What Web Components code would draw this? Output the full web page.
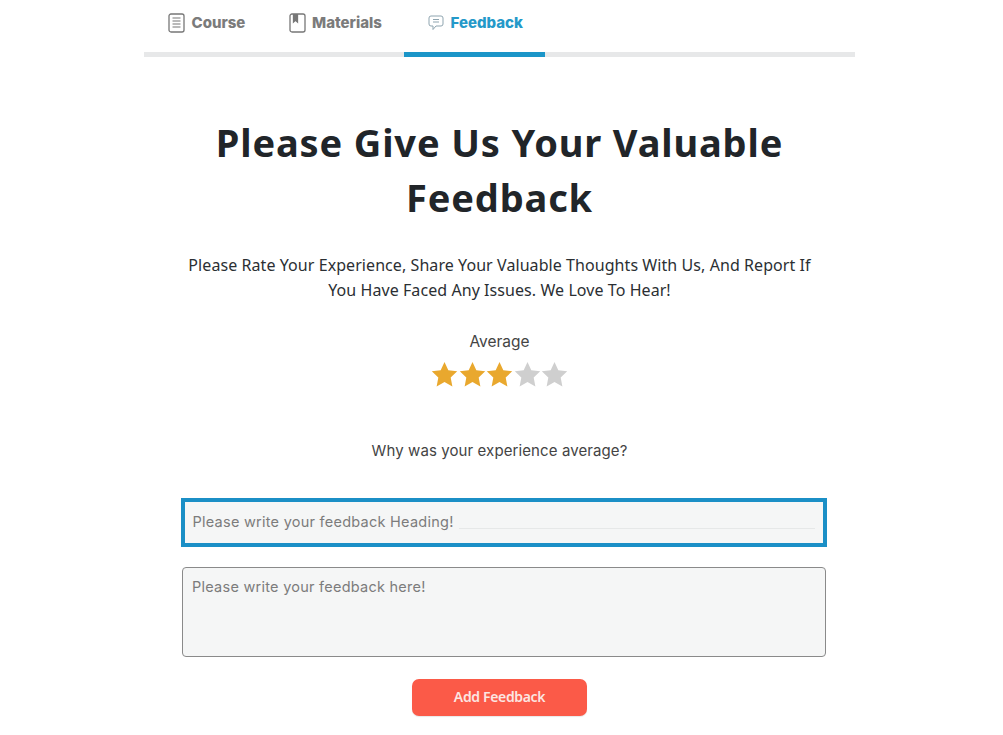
<!DOCTYPE html>
<html>
<head>
<meta charset="utf-8">
<style>
  html, body { margin: 0; background: #fff; }
  body { height: 735px; overflow: hidden; font-family: "Noto Sans", sans-serif; color: #212529; }
</style>
</head>
<body>
<feedback-page></feedback-page>

<script>
const ICONS = {
  course: `<svg width="17" height="20" viewBox="0 0 17 20" fill="none" stroke="#777" stroke-width="1.3"><rect x="1" y="1" width="15" height="18" rx="2"/><path d="M4.5 5h8M4.5 8h8M4.5 11h8M4.5 14h8" stroke-width="1.1"/></svg>`,
  materials: `<svg width="17" height="20" viewBox="0 0 17 20" fill="none" stroke="#777" stroke-width="1.3"><rect x="1" y="1" width="15" height="18" rx="2"/><path d="M4.5 1v8l2-1.8 2 1.8V1" fill="#777"/></svg>`,
  feedback: `<svg width="16" height="16" viewBox="0 0 16 16" fill="none" stroke="#8fa5b0" stroke-width="1"><path d="M3 1h10a2 2 0 0 1 2 2v6a2 2 0 0 1-2 2H8l-3 3.5V11H3a2 2 0 0 1-2-2V3a2 2 0 0 1 2-2z"/><path d="M5 4.500h6M5 7h6"/></svg>`
};

class CourseTabs extends HTMLElement {
  constructor() {
    super();
    this.attachShadow({ mode: "open" });
    this.shadowRoot.innerHTML = `
      <style>
        :host { display: block; font-family: Inter, sans-serif; }
        .tabs { display: flex; height: 52px; border-bottom: 5px solid #e7e8e9; padding-left: 24px; }
        .tab { display: flex; align-items: center; gap: 6.500px; height: 57px; margin-bottom: -5px; box-sizing: border-box; padding-bottom: 12px;
               font-size: 15px; font-weight: 800; color: #7b7b7b; }
        .tab svg { flex: none; }
        .t1 { width: 120.500px; }
        .t2 { width: 115.500px; }
        .t3 { width: 141px; padding-left: 24px; color: #2499c9; border-bottom: 5px solid #1b95c8; padding-bottom: 7px; }
      </style>
      <div class="tabs">
        <div class="tab t1">${ICONS.course}<span>Course</span></div>
        <div class="tab t2">${ICONS.materials}<span>Materials</span></div>
        <div class="tab t3">${ICONS.feedback}<span>Feedback</span></div>
      </div>`;
  }
}
customElements.define("course-tabs", CourseTabs);

class StarRating extends HTMLElement {
  constructor() {
    super();
    this.attachShadow({ mode: "open" });
    const value = parseInt(this.getAttribute("value"), 10) || 0;
    let stars = "";
    for (let i = 0; i < 5; i++) {
      stars += `<svg width="27" height="26" viewBox="0 0 24 23"><path d="M12 .8l3.400 7.300 7.900 1-5.800 5.500 1.500 7.900L12 18.600l-7 3.900 1.500-7.900L.7 9.100l7.900-1z" fill="${i < value ? "#e9a82e" : "#cfcfcf"}"/></svg>`;
    }
    this.shadowRoot.innerHTML = `
      <style>
        :host { display: block; }
        .stars { display: flex; justify-content: center; gap: 0.500px; }
      </style>
      <div class="stars">${stars}</div>`;
  }
}
customElements.define("star-rating", StarRating);

class FeedbackForm extends HTMLElement {
  constructor() {
    super();
    this.attachShadow({ mode: "open" });
    this.shadowRoot.innerHTML = `
      <style>
        :host { display: block; width: 646px; font-family: Inter, sans-serif; text-align: left; }
        .field { box-sizing: border-box; background: #f5f6f6; font-size: 14.500px; letter-spacing: 0.250px; color: #7c7c7c; }
        .heading { position: relative; height: 49px; border: 4px solid #1b8fc6; display: flex; align-items: center; padding: 0 7px 2px 8px; }
        .heading::after { content: ""; position: absolute; left: 274px; right: 8px; top: 26px; height: 1px; background: #e6e8e8; }
        .body { height: 90px; margin: 20px 1px 0 1.500px; border: 1px solid #8a8a8a; border-radius: 4px; padding: 9px 9px 0; line-height: 20px; }
        .submit { display: block; margin: 22px 0 0 231.500px; width: 175px; height: 37px; border: 0; border-radius: 7px; background: #fb5a48; padding: 0 0 2px;
                  color: #fbe6e2; font: 600 14px "Noto Sans", sans-serif; letter-spacing: -0.350px; box-shadow: 0 1px 1px #e8e8e8; }
      </style>
      <div class="field heading">Please write your feedback Heading!</div>
      <div class="field body">Please write your feedback here!</div>
      <button class="submit">Add Feedback</button>`;
  }
}
customElements.define("feedback-form", FeedbackForm);

class FeedbackPage extends HTMLElement {
  constructor() {
    super();
    this.attachShadow({ mode: "open" });
    this.shadowRoot.innerHTML = `
      <style>
        :host { display: block; width: 711px; margin-left: 144px; }
        .content { display: flex; flex-direction: column; align-items: center; text-align: center; }
        h1 { margin: 58px 0 0; width: 620px; font: 700 38px/55px "Noto Sans", sans-serif; letter-spacing: 0.850px; color: #212529; }
        .lead { margin: 28px 0 0; width: 640px; font: 400 16px/25px "Noto Sans", sans-serif; letter-spacing: 0.070px; color: #2b2f33; }
        .label { font: 400 15px/20px Inter, sans-serif; color: #444; }
        .avg { margin-top: 29px; font-size: 15.500px; }
        star-rating { margin-top: 9px; }
        .why { margin-top: 54px; letter-spacing: 0.100px; }
        feedback-form { margin-top: 37px; align-self: flex-start; margin-left: 36.500px; }
      </style>
      <course-tabs></course-tabs>
      <div class="content">
        <h1>Please Give Us Your Valuable Feedback</h1>
        <p class="lead">Please Rate Your Experience, Share Your Valuable Thoughts With Us, And Report If You Have Faced Any Issues. We Love To Hear!</p>
        <div class="label avg">Average</div>
        <star-rating value="3"></star-rating>
        <div class="label why">Why was your experience average?</div>
        <feedback-form></feedback-form>
      </div>`;
  }
}
customElements.define("feedback-page", FeedbackPage);
</script>
</body>
</html>
